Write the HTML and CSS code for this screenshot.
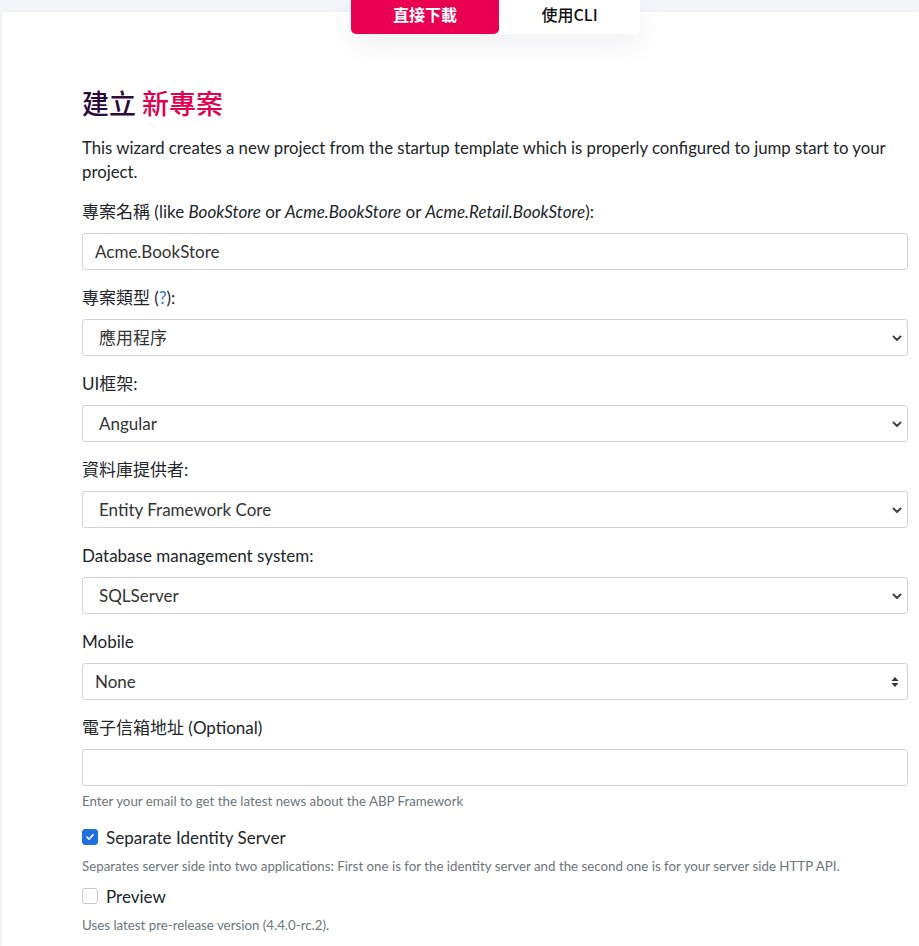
FILE: index.html
```html
<!DOCTYPE html>
<html lang="zh-Hant">
<head>
<meta charset="utf-8">
<title>建立新專案</title>
<link rel="stylesheet" href="styles.css">
</head>
<body>
<div class="page">
  <div class="tabs">
    <a class="tab tab-active">直接下載</a>
    <a class="tab">使用CLI</a>
  </div>
  <div class="card">
    <h1 class="title"><span class="title-dark">建立</span> <span class="title-accent">新專案</span></h1>
    <p class="intro">This wizard creates a new project from the startup template which is properly configured to jump start to your project.</p>

    <div class="group">
      <label class="label">專案名稱 (like <em>BookStore</em> or <em>Acme.BookStore</em> or <em>Acme.Retail.BookStore</em>):</label>
      <input class="control input" type="text" value="Acme.BookStore">
    </div>

    <div class="group">
      <label class="label">專案類型 (<a class="link">?</a>):</label>
      <select class="control select"><option>應用程序</option></select>
    </div>

    <div class="group">
      <label class="label">UI框架:</label>
      <select class="control select"><option>Angular</option></select>
    </div>

    <div class="group">
      <label class="label">資料庫提供者:</label>
      <select class="control select"><option>Entity Framework Core</option></select>
    </div>

    <div class="group">
      <label class="label">Database management system:</label>
      <select class="control select"><option>SQLServer</option></select>
    </div>

    <div class="group">
      <label class="label">Mobile</label>
      <select class="control select select-updown"><option>None</option></select>
    </div>

    <div class="group group-tight">
      <label class="label">電子信箱地址 (Optional)</label>
      <input class="control input" type="text" value="">
      <div class="help">Enter your email to get the latest news about the ABP Framework</div>
    </div>

    <div class="check-group">
      <label class="check">
        <span class="box box-checked">
          <svg width="10" height="10" viewBox="0 0 10 10"><path d="M2 5.2 L4.1 7.2 L8 2.9" fill="none" stroke="#fff" stroke-width="1.6" stroke-linecap="round" stroke-linejoin="round"/></svg>
        </span>
        <span class="check-text">Separate Identity Server</span>
      </label>
      <div class="help check-help">Separates server side into two applications: First one is for the identity server and the second one is for your server side HTTP API.</div>
    </div>

    <div class="check-group">
      <label class="check">
        <span class="box"></span>
        <span class="check-text">Preview</span>
      </label>
      <div class="help check-help">Uses latest pre-release version (4.4.0-rc.2).</div>
    </div>
  </div>
</div>
</body>
</html>
```

FILE: styles.css
```css
html, body {
  margin: 0;
  padding: 0;
}
body {
  background: #f4f5f9;
  font-family: Lato, "Noto Sans CJK TC", sans-serif;
  color: #212529;
  overflow: hidden;
}
.page {
  position: relative;
  padding-top: 12px;
  height: 946px;
  box-sizing: border-box;
}
.tabs {
  position: absolute;
  top: 0;
  left: 351px;
  display: flex;
  z-index: 2;
  box-shadow: 0 10px 30px rgba(40, 40, 80, 0.07);
  border-radius: 0 0 5px 5px;
  background: #fff;
}
.tab {
  height: 34px;
  box-sizing: border-box;
  padding-bottom: 6px;
  display: flex;
  align-items: center;
  justify-content: center;
  font-family: "Noto Sans CJK TC", sans-serif;
  font-size: 16px;
  color: #111;
  text-decoration: none;
}
.tab-active {
  width: 148px;
  background: #ea0050;
  color: #fff;
  font-weight: 700;
  border-radius: 0 0 5px 5px;
}
.tab:not(.tab-active) {
  width: 141px;
  font-weight: 500;
}
.card {
  margin-left: 2px;
  background: #fff;
  padding: 74px 11px 0 80px;
  height: 100%;
  box-sizing: border-box;
  box-shadow: -1px 0 3px rgba(0, 0, 0, 0.03);
}
.title {
  margin: 0 0 16px;
  font-family: "Noto Sans CJK TC", sans-serif;
  font-size: 27px;
  line-height: 34px;
  font-weight: 500;
}
.title-dark {
  color: #2c0b3a;
}
.title-accent {
  color: #e0004f;
}
.intro {
  margin: 0 0 16px;
  font-size: 16.75px;
  line-height: 24px;
}
.group {
  margin-bottom: 16px;
}
.group-tight {
  margin-bottom: 14px;
}
.label {
  display: block;
  font-size: 17px;
  line-height: 24px;
  margin-bottom: 9px;
}
.label em {
  font-style: italic;
}
.link {
  color: #1b73d3;
}
.control {
  display: block;
  width: 100%;
  box-sizing: border-box;
  height: 37px;
  border: 1px solid #d3d3d3;
  border-radius: 3px;
  background-color: #fff;
  font-family: Lato, "Noto Sans CJK TC", sans-serif;
  font-size: 17px;
  color: #333;
  margin: 0;
  outline: none;
}
.input {
  padding: 0 12px;
}
.select {
  appearance: none;
  -webkit-appearance: none;
  padding: 0 30px 0 16px;
  background-image: url("data:image/svg+xml;utf8,<svg xmlns='http://www.w3.org/2000/svg' width='12' height='12' viewBox='0 0 12 12'><path d='M2.5 4.5 L6 8 L9.5 4.5' fill='none' stroke='%23444' stroke-width='2' stroke-linecap='round' stroke-linejoin='round'/></svg>");
  background-repeat: no-repeat;
  background-position: right 4px center;
  background-size: 12px 12px;
}
.select-updown {
  padding-left: 12px;
  background-image: url("data:image/svg+xml;utf8,<svg xmlns='http://www.w3.org/2000/svg' width='10' height='14' viewBox='0 0 10 14'><path d='M5 2 L8.5 6 L1.5 6 Z M5 12 L8.5 8 L1.5 8 Z' fill='%23333'/></svg>");
  background-position: right 7px center;
  background-size: 10px 14px;
}
.help {
  font-size: 13.3px;
  line-height: 20px;
  color: #6c757d;
  margin-top: 5px;
}
.check-help {
  margin-top: 7px;
}
.check-group + .check-group {
  margin-top: 8px;
}
.check {
  display: flex;
  align-items: center;
  height: 24px;
  gap: 8px;
}
.box {
  width: 16px;
  height: 16px;
  box-sizing: border-box;
  border: 1px solid #c9c9c9;
  border-radius: 3px;
  display: flex;
  align-items: center;
  justify-content: center;
  background: #fff;
}
.box-checked {
  background: #1f6fdd;
  border-color: #1f6fdd;
}
.check-text {
  font-size: 17px;
}
```
